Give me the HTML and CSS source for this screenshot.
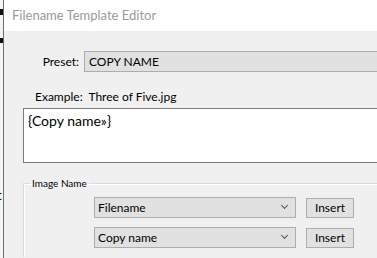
FILE: index.html
```html
<!DOCTYPE html>
<html lang="en">
<head>
    <meta charset="UTF-8">
    <title>Filename Template Editor</title>
    <link rel="stylesheet" href="styles.css">
</head>
<body>
    <div class="behind">
        <span class="mark m1"></span>
        <span class="mark m2"></span>
        <span class="stray">t</span>
    </div>
    <div class="window">
        <div class="titlebar">Filename Template Editor</div>
        <div class="content">
            <div class="preset-row">
                <label class="preset-label">Preset:</label>
                <div class="preset-field">COPY NAME</div>
            </div>
            <div class="example">Example:&nbsp; Three of Five.jpg</div>
            <div class="template-box">{Copy name»}</div>

            <fieldset class="group">
                <legend>Image Name</legend>
                <div class="token-row">
                    <div class="combo">Filename<span class="chev"></span></div>
                    <button class="insert">Insert</button>
                </div>
                <div class="token-row">
                    <div class="combo">Copy name<span class="chev"></span></div>
                    <button class="insert">Insert</button>
                </div>
            </fieldset>
        </div>
    </div>
</body>
</html>
```

FILE: styles.css
```css
body {
    margin: 0;
    width: 377px;
    height: 258px;
    overflow: hidden;
    display: flex;
    font-family: Lato, "Noto Sans", sans-serif;
    font-size: 12px;
    color: #000;
    background: #f0f0f0;
}
.behind {
    width: 3px;
    background: #f4f4f4;
    position: relative;
    flex-shrink: 0;
}
.mark {
    position: absolute;
    left: 0;
    width: 3px;
    background: #111;
}
.m1 { top: 9px; height: 6px; }
.m2 { top: 38px; height: 5px; }
.stray {
    position: absolute;
    left: -3px;
    top: 187px;
    font-size: 13px;
}
.window {
    flex: 1;
    border-left: 1px solid #6e6e6e;
    display: flex;
    flex-direction: column;
}
.titlebar {
    height: 31px;
    line-height: 31px;
    background: #fff;
    color: #9a9a9a;
    font-size: 13px;
    padding-left: 8px;
    white-space: nowrap;
}
.content {
    flex: 1;
    background: #f0f0f0;
    padding-top: 20px;
    padding-left: 19px;
}
.preset-row {
    display: flex;
    align-items: center;
    height: 21px;
}
.preset-label {
    width: 56px;
    text-align: right;
    padding-right: 5px;
}
.preset-field {
    flex: 1;
    height: 19px;
    line-height: 19px;
    background: #e1e1e1;
    border: 1px solid #adadad;
    border-right: none;
    padding-left: 4px;
}
.example {
    margin-top: 15px;
    margin-left: 12px;
    height: 20px;
    line-height: 20px;
}
.template-box {
    margin-top: 1px;
    height: 55px;
    box-sizing: border-box;
    background: #fff;
    border: 1px solid #7a7a7a;
    border-right: none;
    font-size: 14px;
    padding: 3px 4px 0;
}
.group {
    margin: 14px 0 0;
    padding: 8px 0 0 70px;
    border: 1px solid #dcdcdc;
    border-right: none;
    border-bottom: none;
    box-shadow: inset 1px 1px 0 #fff;
    min-inline-size: 0;
}
.group legend {
    font-size: 10px;
    padding: 0 2px;
    margin-left: -64px;
}
.token-row {
    display: flex;
    align-items: center;
    gap: 10px;
    height: 21px;
    margin-bottom: 9px;
}
.combo {
    position: relative;
    width: 197px;
    height: 19px;
    line-height: 19px;
    background: #e1e1e1;
    border: 1px solid #adadad;
    padding-left: 3px;
}
.chev {
    position: absolute;
    right: 8px;
    top: 5px;
    width: 4px;
    height: 4px;
    border-right: 1px solid #555;
    border-bottom: 1px solid #555;
    transform: rotate(45deg);
}
.insert {
    width: 48px;
    height: 20px;
    padding: 0;
    font-family: inherit;
    font-size: 12px;
    background: #e1e1e1;
    border: 1px solid #adadad;
    border-radius: 0;
}
```
